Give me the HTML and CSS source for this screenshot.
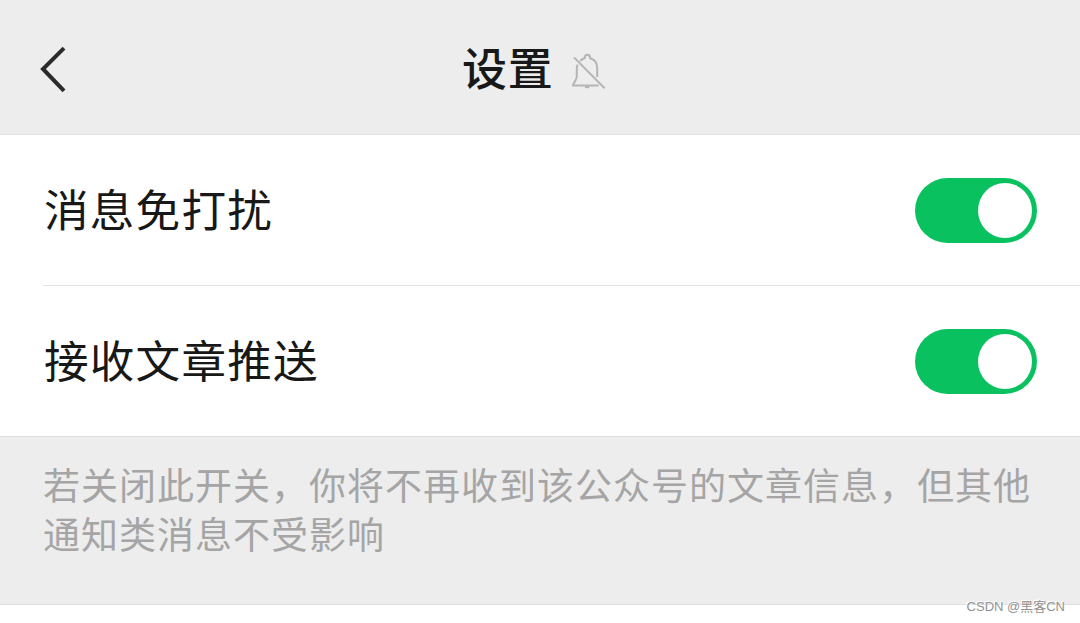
FILE: index.html
```
<!DOCTYPE html>
<html lang="zh-CN">

<head>
  <meta charset="UTF-8">
  <meta name="viewport" content="width=device-width, initial-scale=1.0">
  <title>设置</title>
  <link rel="stylesheet" href="styles.css">
</head>

<body>
  <div class="page">
    <header class="top">
      <a href="#" class="back" aria-label="返回">
        <svg width="30" height="50" viewBox="0 0 30 50" fill="none" stroke="#2b2b2b" stroke-width="4">
          <path d="M26 4.2 L5 25 L26 46.8" />
        </svg>
      </a>
      <h1 class="title">设置</h1>
      <svg class="mute" width="36" height="38" viewBox="0 0 36 38" fill="none" stroke="#b5b5b5" stroke-width="2">
        <path d="M6.6 12.5 C6 14 5.8 15.5 5.8 17.5 V24.5 C5.8 28 2.6 30 2 33.4 H27.6" />
        <path d="M9.2 9 C10.6 7.4 11.6 6.8 13.6 6.3 C13.6 3.9 14.6 2.7 16.4 2.7 C18.2 2.7 19.2 3.9 19.2 6.3 C24 7.5 26.2 11 26.2 16.5 V25" />
        <path d="M14 35.2 H18.4" />
        <path d="M3 5.4 L33.6 36.2" />
      </svg>
    </header>

    <ul class="list">
      <li class="row">
        <span class="label">消息免打扰</span>
        <span class="switch"><span class="knob"></span></span>
      </li>
      <li class="row">
        <span class="label">接收文章推送</span>
        <span class="switch"><span class="knob"></span></span>
      </li>
    </ul>

    <p class="note">若关闭此开关，你将不再收到该公众号的文章信息，但其他通知类消息不受影响</p>
    <span class="mark">CSDN @黑客CN</span>
  </div>
</body>

</html>
```
FILE: styles.css
```
* {
  box-sizing: border-box;
}

body {
  margin: 0;
  background-color: #fff;
  font-family: "Noto Sans CJK SC", sans-serif;
  color: #181818;
}

.page {
  position: relative;
  height: 623px;
  overflow: hidden;
}

.top {
  display: grid;
  grid-template-columns: 462px auto 1fr;
  align-items: center;
  height: 135px;
  padding-top: 4px;
  background-color: #ededed;
  border-bottom: 1px solid #e0e0e0;
}

.back {
  display: flex;
  padding-left: 38px;
}

.title {
  margin: 0;
  padding-bottom: 4px;
  font-size: 45px;
  line-height: 60px;
  font-weight: 500;
  letter-spacing: 0.7px;
}

.mute {
  margin-left: 18px;
  margin-top: 3px;
}

.list {
  margin: 0;
  padding: 0 0 0 43px;
  list-style: none;
  border-bottom: 1px solid #e0e0e0;
}

.row {
  display: flex;
  justify-content: space-between;
  align-items: center;
  height: 150px;
  padding-right: 43px;
}

.row + .row {
  height: 151px;
  border-top: 1px solid #e3e3e3;
}

.label {
  padding: 0 0 5px 1px;
  font-size: 44.6px;
  line-height: 60px;
  letter-spacing: 1.2px;
}

.switch {
  display: flex;
  justify-content: flex-end;
  align-items: center;
  width: 122px;
  height: 65px;
  padding-right: 5px;
  border-radius: 33px;
  background-color: #0ac160;
}

.knob {
  width: 54px;
  height: 55px;
  border-radius: 50%;
  background-color: #fff;
}

.note {
  margin: 0;
  height: 168px;
  padding: 23px 36px 0 43px;
  font-size: 37px;
  line-height: 49px;
  letter-spacing: 1px;
  color: #a5a5a5;
  background-color: #ededed;
  border-bottom: 1px solid #e0e0e0;
}

/* watermark over the bottom edge of the note */
.mark {
  position: absolute;
  right: 15px;
  bottom: 6px;
  font-family: "Liberation Sans", "Noto Sans CJK SC", sans-serif;
  font-size: 13px;
  line-height: 20px;
  color: #929292;
  text-shadow: -1px -1px 0 #fff;
}
```
